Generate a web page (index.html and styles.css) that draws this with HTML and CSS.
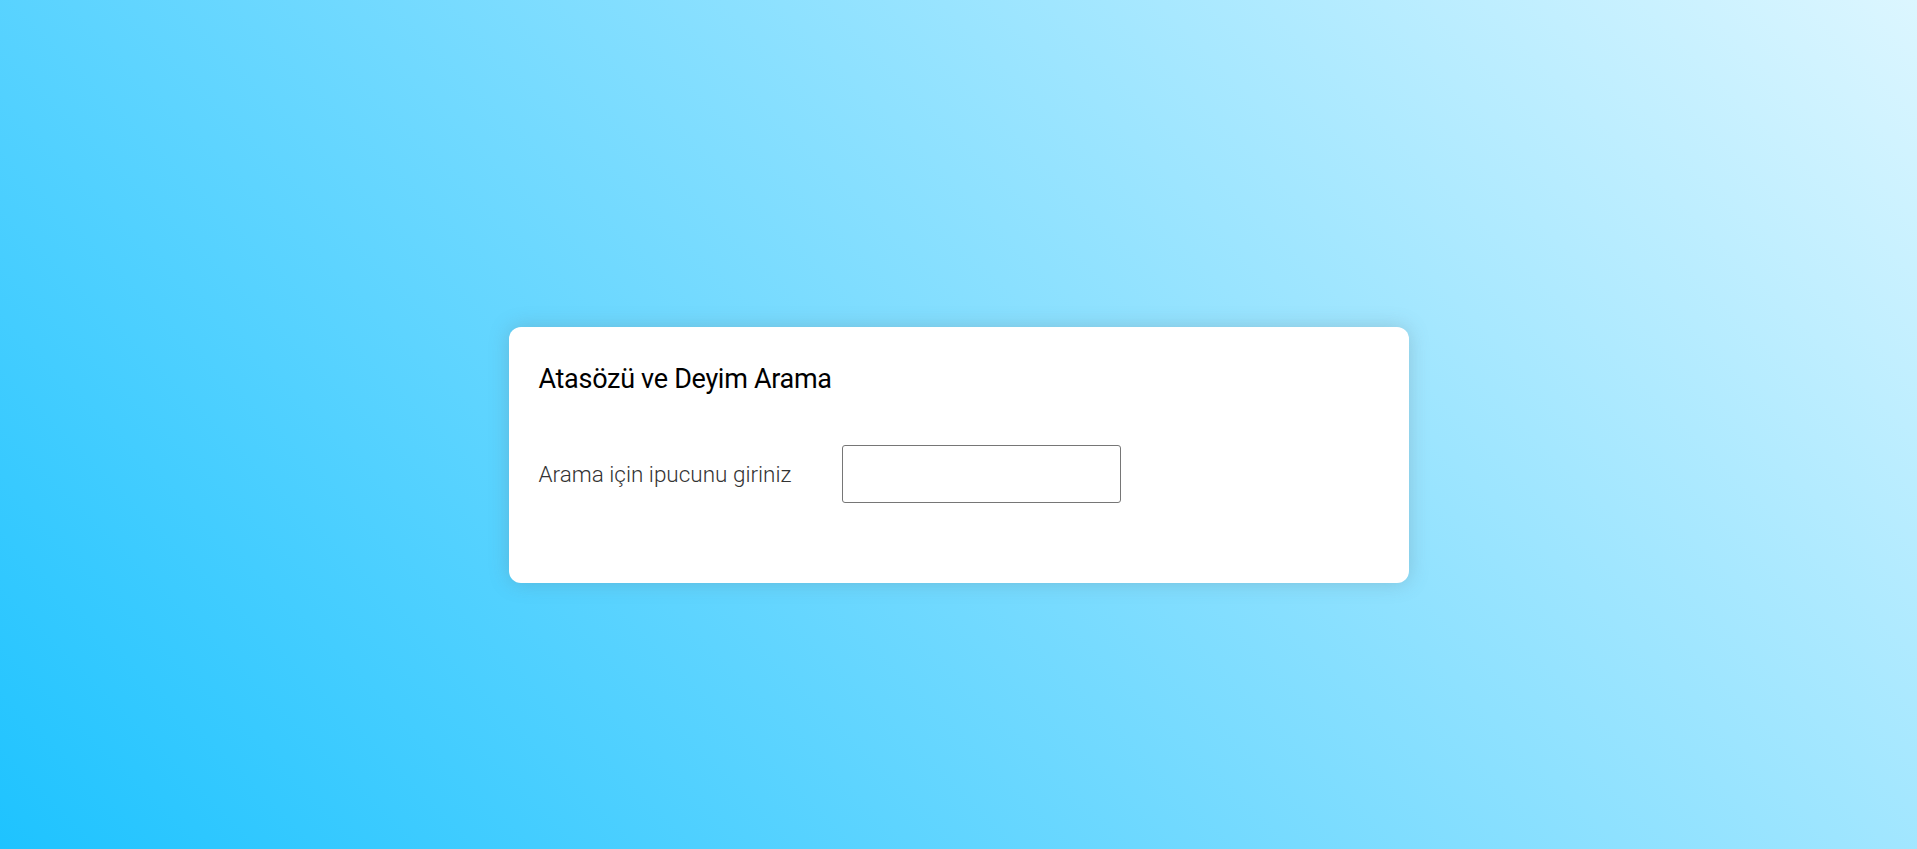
FILE: index.html
```html
<!DOCTYPE html>
<html lang="tr">
<head>
<meta charset="utf-8">
<title>Atasözü ve Deyim Arama</title>
<link rel="stylesheet" href="styles.css">
</head>
<body>
<main class="page">
  <section class="card">
    <h1 class="card-title">Atasözü ve Deyim Arama</h1>
    <div class="search-row">
      <label class="search-label" for="hint">Arama için ipucunu giriniz</label>
      <input class="search-input" id="hint" type="text">
    </div>
  </section>
</main>
</body>
</html>
```
FILE: styles.css
```css
html, body {
  margin: 0;
  padding: 0;
  height: 100%;
}
body {
  background: linear-gradient(45deg, #1ec3ff 0%, #dcf6ff 100%);
  font-family: Roboto, "Open Sans", sans-serif;
}
.page {
  box-sizing: border-box;
  height: 100vh;
  padding-top: 61px;
  display: flex;
  align-items: center;
  justify-content: center;
}
.card {
  box-sizing: border-box;
  width: 900px;
  height: 256px;
  background: #fff;
  border-radius: 12px;
  box-shadow: 0 0 20px rgba(90, 110, 120, 0.28);
  padding: 30px 30px;
}
.card-title {
  margin: 2px 0 0;
  font-size: 27px;
  font-weight: 400;
  color: #000;
  line-height: 40px;
  letter-spacing: -0.3px;
}
.search-row {
  display: flex;
  align-items: center;
  margin-top: 46px;
}
.search-label {
  width: 303px;
  font-size: 22.5px;
  font-weight: 300;
  color: #333;
}
.search-input {
  box-sizing: border-box;
  width: 279px;
  height: 58px;
  border: 1px solid #767676;
  border-radius: 3px;
  margin: 0;
  padding: 0 8px;
  font-size: 20px;
}
```
